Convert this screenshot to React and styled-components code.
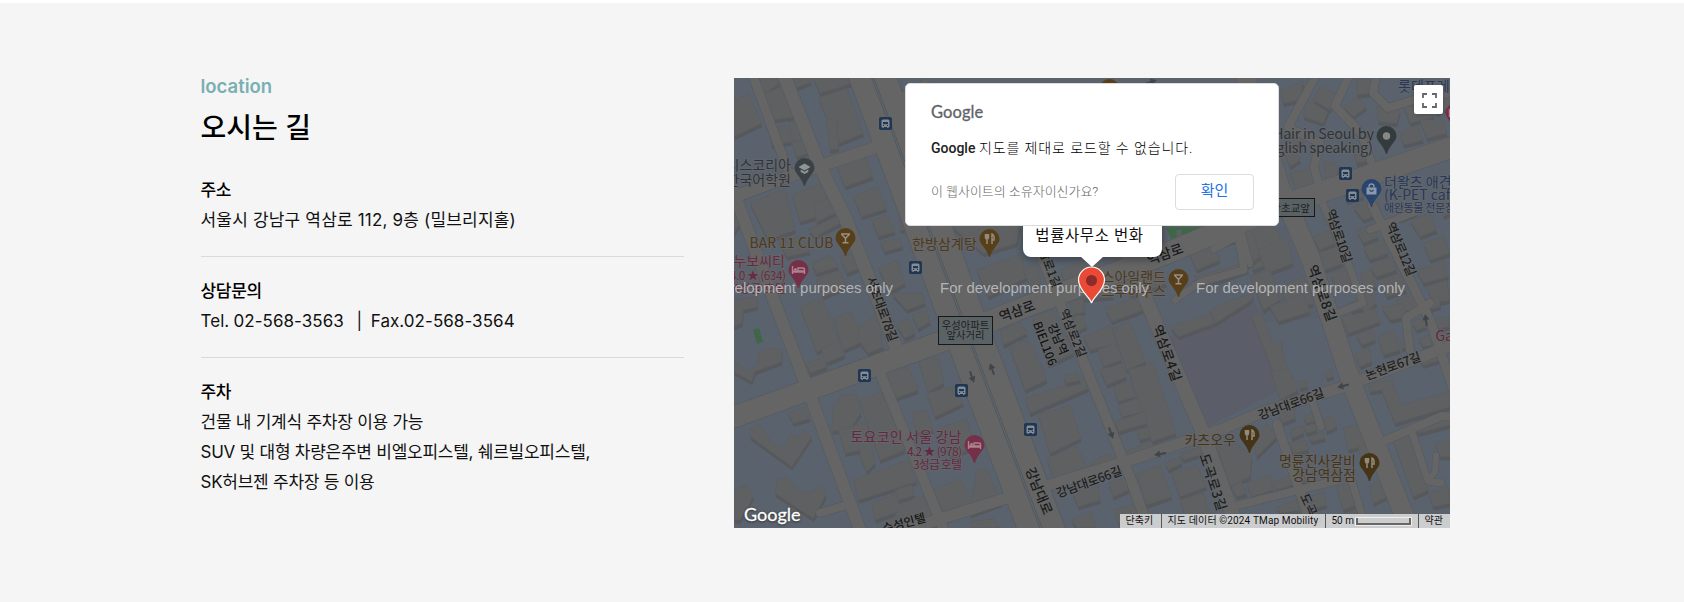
import React from "react";
import styled, { createGlobalStyle } from "styled-components";

const Global = createGlobalStyle`
  * { box-sizing: border-box; }
  body { margin: 0; background: #fff; font-family: Inter, "Noto Sans CJK KR", sans-serif; }
`;

const Section = styled.section`
  display: flex;
  gap: 50px;
  height: 599px;
  margin-top: 3px;
  padding: 75px 234px 0 201px;
  background: #f5f5f5;
`;
const Info = styled.div`
  width: 483px;
  flex: none;
`;
const Eyebrow = styled.p`
  margin: -7px 0 0 -0.5px;
  font-size: 18.5px;
  line-height: 30px;
  font-weight: 600;
  letter-spacing: 0;
  color: #7aafb2;
`;
const Title = styled.h2`
  margin: 6px 0 26px -0.5px;
  font-size: 28px;
  line-height: 42px;
  font-weight: 500;
  letter-spacing: 0;
  color: #000;
`;
const Entry = styled.div`
  padding-bottom: 21px;
  margin-bottom: 19px;
  border-bottom: 1px solid ${(p) => (p.$last ? "transparent" : "#dadada")};
`;
const Term = styled.h3`
  margin: 0;
  font-size: 17px;
  line-height: 30px;
  font-weight: 500;
  letter-spacing: -0.3px;
  color: #000;
  text-indent: -0.5px;
`;
const Line = styled.p`
  margin: 0;
  font-size: ${(p) => p.$size || "17px"};
  line-height: 30px;
  font-weight: 400;
  letter-spacing: ${(p) => p.$track || "-0.25px"};
  word-spacing: ${(p) => p.$gap || 0};
  color: #111;
  white-space: pre;
  text-indent: -0.5px;
`;

const MapBox = styled.div`
  position: relative;
  width: 716px;
  height: 450px;
  flex: none;
  overflow: hidden;
  background: #59636d;
`;
const Canvas = styled.svg`
  display: block;
  width: 716px;
  height: 450px;
`;
const Dialog = styled.div`
  position: absolute;
  left: 171px;
  top: 5px;
  width: 374px;
  height: 143px;
  padding: 18px 24px 0 25px;
  border: 1px solid #dcdcdc;
  border-radius: 5px;
  background: #fff;
`;
const DialogLogo = styled.div`
  font: 400 16.5px/20px Lato, sans-serif;
  letter-spacing: 0.1px;
  color: #5f6368;
  -webkit-text-stroke: 0.3px #5f6368;
`;
const DialogText = styled.div`
  margin-top: 16px;
  font: 500 14px/20px Roboto, "Noto Sans CJK KR", sans-serif;
  color: #212121;
  span { font-weight: 300; letter-spacing: 0.9px; color: #000; }
`;
const DialogFoot = styled.div`
  display: flex;
  justify-content: space-between;
  margin-top: 16px;
`;
const OwnerLink = styled.span`
  padding-top: 9px;
  font: 300 13px/18px Roboto, "Noto Sans CJK KR", sans-serif;
  letter-spacing: -0.03px;
  color: #666;
`;
const OkButton = styled.button`
  width: 79px;
  height: 36px;
  padding: 0 0 2px;
  border: 1px solid #dadce0;
  border-radius: 4px;
  background: #fff;
  color: #1a73e8;
  font: 400 15px/20px Roboto, "Noto Sans CJK KR", sans-serif;
`;
const Bubble = styled.div`
  position: absolute;
  left: 289px;
  top: 130px;
  width: 139px;
  height: 49px;
  padding: 17px 6px 0 0;
  border-radius: 8px;
  background: #fff;
  box-shadow: 0 2px 7px 1px rgba(0, 0, 0, 0.3);
  text-align: center;
  font: 400 15.5px/22px Roboto, "Noto Sans CJK KR", sans-serif;
  letter-spacing: 0.6px;
  color: #111;
  &::after {
    content: "";
    position: absolute;
    left: 57px;
    top: 48px;
    border: 12px solid transparent;
    border-top: 11px solid #fff;
    border-bottom: 0;
  }
`;
const FullscreenButton = styled.button`
  position: absolute;
  right: 7px;
  top: 7px;
  display: grid;
  place-items: center;
  width: 29px;
  height: 29px;
  padding: 1px 0 0 1px;
  border: 0;
  border-radius: 2px;
  background: #fff;
  box-shadow: 0 1px 4px -1px rgba(0, 0, 0, 0.3);
`;
const MapLogo = styled.div`
  position: absolute;
  left: 10px;
  bottom: 3px;
  font: 400 18px/22px Lato, sans-serif;
  color: #fff;
  -webkit-text-stroke: 0.3px #fff;
  text-shadow: 0 0 2px #333, 0 1px 2px #333;
`;
const Credits = styled.div`
  position: absolute;
  right: 0;
  bottom: 0;
  display: flex;
  height: 14px;
  font: 400 10px/13px Roboto, "Noto Sans CJK KR", sans-serif;
  color: #111;
`;
const Credit = styled.span`
  display: flex;
  align-items: center;
  width: ${(p) => p.$w}px;
  padding: 0 0 1px 5.5px;
  background: rgba(213, 213, 213, 0.93);
  border-left: ${(p) => (p.$first ? 0 : 1)}px solid #555;
  letter-spacing: ${(p) => p.$track || 0}px;
  white-space: nowrap;
`;
const ScaleBar = styled.i`
  width: 55px;
  height: 7px;
  margin: 1px 0 0 2px;
  border: 2px solid #666;
  border-top: 0;
  outline: 1px solid #eee;
`;

/* Building footprints, grouped by map sector. Each sector is drawn at three units per pixel. */
const sectors = [
  {
    x: 730, y: 70,
    shapes: [
      "12,95 55,70 95,160 12,200", "62,30 140,24 150,40 80,85", "95,75 175,40 200,95 120,125", "105,125 180,100 195,140 125,150",
      "175,24 235,24 245,35 195,55", "250,24 355,24 365,40 270,70", "265,85 350,55 400,190 325,220", "115,180 165,165 185,215 125,225",
      "175,155 225,150 240,200 190,215", "185,220 235,200 245,245 200,260", "60,400 165,355 195,480 115,510", "185,375 270,340 290,385 255,400 262,440 210,455",
      "315,275 405,250 428,320 345,350", "370,380 440,350 470,415 395,440", "425,450 470,435 495,485 445,500", "450,515 510,505 518,530 465,545",
      "235,480 330,430 340,455 255,500", "245,580 300,555 325,590 260,610", "260,630 330,600 350,650 280,680", "445,595 500,570 525,640 480,665",
      "360,24 425,24 460,95 400,110", "290,150 320,140 325,235 300,240", "250,400 310,380 325,425 260,455", "12,430 30,460 12,490",
      "145,510 215,500 240,545 170,560", "330,560 390,540 400,590 350,610",
    ],
  },
  {
    x: 900, y: 70,
    shapes: [
      "230,600 360,555 385,620 265,680", "150,465 360,465 350,520 250,550", "370,600 410,580 425,640 390,650", "480,600 590,560 640,680 520,690",
      "640,560 740,525 800,640 690,680", "860,530 930,500 960,570 890,600", "920,480 990,470 1010,510 940,530", "1020,470 1120,465 1170,560 1060,600",
      "880,620 1030,580 1045,600 910,650", "100,580 140,560 160,600 120,620", "0,440 12,440 12,480 0,480", "60,540 100,530 110,560 70,570",
    ],
  },
  {
    x: 1230, y: 70,
    shapes: [
      "150,60 220,35 210,90 160,100", "230,90 300,110 280,160 220,140", "270,50 320,70 300,120 250,90", "340,110 385,80 410,110 370,140",
      "380,30 430,30 425,70 380,75", "440,110 510,120 500,160 445,155", "520,110 600,100 610,140 540,160", "610,80 660,60 660,110 620,130",
      "510,190 560,165 580,210 520,225", "570,150 640,150 650,190 590,205", "170,190 215,180 220,220 180,230", "160,240 200,235 210,270 180,290",
      "180,310 250,290 255,340 200,365", "280,270 330,290 310,340 290,340", "370,240 410,225 420,270 380,280", "20,510 70,490 90,560 50,590",
      "85,540 170,500 190,580 110,610", "250,500 300,480 315,520 270,540", "260,550 320,530 340,580 285,600", "300,610 360,590 375,640 320,660",
      "370,410 440,380 455,430 400,450", "380,480 430,460 445,500 400,520", "400,530 460,510 475,550 420,570", "420,590 490,560 500,600 440,620",
      "450,630 510,610 530,660 470,680", "540,450 600,430 620,480 570,500", "580,520 640,500 660,550 600,570", "560,600 640,575 655,620 580,640",
      "590,650 650,630 660,690 610,700", "390,610 425,600 440,650 405,660", "150,650 220,620 250,700 180,725", "560,250 640,220 650,255 570,280",
      "340,365 395,350 400,380 350,395", "500,420 550,400 560,430 510,450", "380,680 420,660 440,700 400,730", "500,690 560,670 570,710 510,730",
      "60,620 120,600 150,690 100,720", "630,390 660,380 660,430 640,440",
    ],
  },
  {
    x: 730, y: 290,
    shapes: [
      "12,30 80,20 82,50 40,60 35,100 12,110", "10,210 50,245 85,225 85,190 115,175 155,180 155,215 75,245 65,275 12,245", "210,50 275,24 330,160 260,185",
      "310,85 360,65 410,150 340,180", "275,175 330,155 345,195 285,220", "385,110 440,75 460,170 415,190 385,150", "485,10 580,10 585,40 530,60",
      "500,105 535,85 555,130 525,145", "545,75 590,60 600,95 565,115", "230,220 285,200 290,230 240,250", "465,250 530,225 565,300 495,325",
      "565,210 600,195 630,210 640,280 595,305", "590,310 670,290 700,340 615,380", "310,350 335,315 380,310 392,370 365,410 305,425", "388,330 455,305 525,480 450,510",
      "355,410 410,395 435,520 410,545", "545,370 590,360 610,420 560,430", "60,415 90,405 130,465 160,470 185,430 210,445 222,420 245,440 185,530 60,440",
      "175,370 225,350 240,385 190,400", "370,570 535,510 560,575 385,630", "425,640 500,610 520,660 435,690", "495,600 545,585 555,615 505,630",
      "140,570 170,560 205,600 240,610 275,585 288,615 250,685 135,610", "12,600 50,585 70,620 30,690 12,690", "610,600 690,565 730,640 650,690", "630,415 710,385 735,470 660,500",
      "520,640 580,615 620,713 470,713", "325,420 370,410 390,480 345,490",
    ],
  },
  {
    x: 970, y: 290,
    shapes: [
      "90,120 150,95 172,130 100,165", "120,175 165,150 190,170 230,270 165,300", "185,80 250,60 310,190 235,225", "165,325 345,265 355,295 180,370",
      "280,260 320,245 330,270 290,280", "205,375 300,345 332,445 240,490", "230,505 320,470 350,530 255,580", "340,140 420,105 440,160 360,180",
      "385,180 435,160 455,210 400,230", "390,240 455,220 470,260 410,285", "428,115 480,95 527,215 470,240", "475,240 550,220 617,430 545,455",
      "430,290 480,275 495,320 445,335", "445,345 500,325 520,365 455,380", "435,395 525,365 530,400 445,425", "500,420 535,410 540,440 510,450",
      "460,485 545,455 555,480 475,510", "405,55 490,24 520,60 425,95", "300,35 340,24 345,65 305,75", "600,110 740,65 745,95 625,140",
      "360,515 420,490 440,530 380,550", "305,600 380,570 390,630 325,650", "500,550 570,525 605,620 530,645", "605,550 680,525 710,590 630,620",
      "630,630 700,610 720,670 650,690", "20,540 50,535 95,640 0,675", "305,690 360,665 380,713 320,713", "585,520 630,500 635,520 595,540",
      "415,580 470,560 475,600 430,620", "435,660 500,640 510,680 445,700", "630,490 690,470 700,490 640,510", "0,695 70,685 90,713 0,713",
      "310,80 335,75 350,110 320,125",
    ],
  },
  {
    x: 1210, y: 290,
    shapes: [
      "125,80 155,70 190,160 215,155 218,190 235,240 190,250", "180,50 280,10 300,65 205,95", "0,60 60,30 130,10 125,30 15,100", "395,80 495,55 510,95 415,130",
      "415,40 450,30 460,55 425,65", "440,135 490,120 495,150 455,165", "505,140 550,120 570,180 520,195", "435,190 475,170 485,215 450,230",
      "570,150 600,140 605,170 575,175", "515,50 580,40 590,80 540,90", "605,95 640,80 650,110 620,120", "625,145 665,135 665,165 640,170",
      "185,245 235,235 265,300 210,330", "345,245 365,240 370,260 350,265", "475,280 545,270 555,295 480,305", "515,300 550,285 575,345 720,305 720,350 555,400",
      "205,370 250,350 255,385 215,400", "240,420 275,405 280,430 245,445", "280,380 320,365 325,390 290,400", "340,390 370,375 380,410 350,425",
      "280,410 315,400 320,420 290,430", "295,440 340,425 345,445 305,455", "400,415 450,400 465,465 415,480", "130,450 170,400 200,440 140,500",
      "20,470 80,460 125,500 120,560 60,590", "545,440 600,425 655,600 610,620", "610,410 690,385 720,370 720,405 625,430", "675,460 720,450 720,500 690,500",
      "65,590 95,575 110,610 80,620", "110,580 180,555 190,600 125,620", "190,575 280,540 290,570 200,600", "300,620 340,605 350,645 310,655",
      "340,530 370,510 385,550 360,560", "480,590 510,570 530,620 490,640", "655,610 715,590 720,640 670,650", "380,590 430,570 450,640 400,660",
      "200,650 260,630 270,660 210,670", "445,465 470,460 480,490 450,500", "640,30 690,20 690,50 650,60", "670,90 715,80 718,110 685,115",
      "240,460 290,450 295,480 250,490", "410,670 460,650 465,670 420,670", "620,200 680,180 690,210 640,225", "265,275 285,270 292,290 270,295",
    ],
  },
];

const roads = [
  ["M750 68L787 168", 9], ["M734 197L784 178L877 147L912 132", 12], ["M730 182L773 298L807 387L862 535", 12],
  ["M780 65L820 167L845 217L898 352", 13], ["M879 370L946 535", 10], ["M820 513L850 504", 8],
  ["M734 417L943 341L1017 310L1165 254L1283 205L1450 148", 21], ["M870 541L1010 497L1127 461L1220 430L1260 413L1343 387L1450 346", 11],
  ["M1006 166L1060 303L1130 477L1150 533", 10], ["M1125 250L1203 433L1240 535", 14], ["M1243 68L1280 187L1310 257L1353 387L1412 535", 19],
  ["M1318 193L1342 247L1363 303L1325 318", 7], ["M1372 205L1430 320L1455 395", 9], ["M1351 72L1335 106L1361 133L1373 167", 8],
  ["M1377 72L1373 93L1388 108L1420 98L1455 92", 8], ["M1318 72L1288 127L1320 143L1314 167L1321 193", 8],
  ["M1214 249L1238 236L1244 270L1200 282L1175 300", 7], ["M1277 424L1307 513L1320 535", 9], ["M1310 395L1321 427", 7],
  ["M1227 508L1335 481", 8], ["M1410 350L1406 318L1430 303", 8], ["M1386 440L1442 416L1455 417", 8],
  ["M1412 432L1428 481L1441 483", 7], ["M1436 455L1435 472L1428 480", 6], ["M1350 475L1366 528", 7], ["M1370 230L1420 210", 7],
  ["M1230 238L1242 234L1250 264", 6], ["M900 98L925 84", 8],
];

const buses = [[885.5, 123.5], [915.5, 267.5], [864.5, 375.5], [961.5, 390.5], [1030.5, 429.5], [1345.5, 173.5], [1352.5, 195.5]];

const FOOD = "#463417";
const DINE = "#574019";
const PINK = "#753047";
const pins = [
  [804.5, 168, "#3b4246", "school"], [845.5, 238, DINE, "drink"], [798.5, 270, PINK, "bed"], [989.5, 239, DINE, "fork"],
  [1178.5, 279, DINE, "drink"], [1386.5, 136, "#343b3d", "dot"], [1371.5, 189, "#29446f", "bag"], [974.5, 445, PINK, "bed"],
  [1249.5, 435, FOOD, "fork"], [1369.5, 463, FOOD, "fork"], [1109.5, 89, DINE, "none"], [1455.5, 113, PINK, "bed"],
];

/* text, x, y, size, colour, anchor, rotation, width */
const labels = [
  ["시스코리아", 791, 170, 14, "#30343a", "end"], ["한국어학원", 791, 184.5, 14, "#30343a", "end"],
  ["BAR 11 CLUB", 749.5, 248, 14, "#4e391b", "start", 0, 84], ["누보씨티", 785, 266, 14, "#6b2a3e", "end"],
  ["4.0 ★ (634)", 786, 280, 12, "#6b2a3e", "end", 0, 56], ["4성급 호텔", 786, 293, 12, "#6b2a3e", "end"],
  ["한방삼계탕", 977, 248.5, 14, "#4e391b", "end", 0, 65], ["토요코인 서울 강남", 961.5, 442, 14, "#642840", "end", 0, 111],
  ["4.2 ★ (978)", 962, 456, 12, "#642840", "end", 0, 55], ["3성급 호텔", 962, 469, 12, "#642840", "end", 0, 49],
  ["카츠오우", 1236, 445, 14, "#463418", "end"], ["명륜진사갈비", 1356, 466, 14, "#463418", "end", 0, 77],
  ["강남역삼점", 1356, 479.5, 14, "#463418", "end", 0, 64], ["부스아일랜드", 1166, 282, 14, "#4e391b", "end"],
  ["스투하우스", 1166, 296, 14, "#4e391b", "end"], ["Hair in Seoul by", 1374, 139, 14.5, "#30343a", "end", 0, 101],
  ["(English speaking)", 1373, 153, 14.5, "#30343a", "end", 0, 118], ["롯데프레", 1398, 91, 14, "#26395b", "start"],
  ["더왈츠 애견", 1384, 187, 14, "#26395b", "start"], ["(K-PET cafe", 1384, 200, 14, "#26395b", "start"],
  ["애완동물 전문점", 1384, 211.5, 11, "#26395b", "start", 0, 71], ["Ga", 1435.5, 341, 14, "#652536", "start"],
  ["서초대로78길", 882, 309, 12.5, "#1f1f1f", "middle", 70, 68], ["역삼로1길", 1048, 263, 12, "#1f1f1f", "middle", 69],
  ["역삼로", 1017, 311, 13.5, "#1a1a1a", "middle", -20], ["역삼로", 1165, 254, 13.5, "#1a1a1a", "middle", -20],
  ["강남역", 1058, 339, 12, "#151515", "middle", 67], ["BIEL106", 1045, 343.5, 12, "#151515", "middle", 69],
  ["역삼로2길", 1073, 333, 12, "#1f1f1f", "middle", 68], ["역삼로4길", 1167, 353, 13.5, "#1a1a1a", "middle", 70, 59],
  ["역삼로8길", 1322, 293, 13.5, "#1a1a1a", "middle", 70, 59], ["역삼로10길", 1339, 236, 12.5, "#1f1f1f", "middle", 71, 56],
  ["역삼로12길", 1401, 249, 12.5, "#1f1f1f", "middle", 67, 57], ["강남대로", 1039, 491, 13.5, "#1a1a1a", "middle", 68],
  ["강남대로66길", 1089, 482, 12.5, "#1f1f1f", "middle", -20, 69], ["강남대로66길", 1291, 404, 12.5, "#1f1f1f", "middle", -20, 69],
  ["논현로67길", 1393, 366, 12.5, "#1f1f1f", "middle", -20, 58], ["도곡로3길", 1213, 482, 13.5, "#1f1f1f", "middle", 72, 59],
  ["도곡로", 1311, 510, 12.5, "#1f1f1f", "middle", 66], ["수성인텔", 904, 523, 12, "#151515", "middle", -15],
];

const arrows = [[972, 377, 160], [992, 369, -20], [1111, 433, 160], [1160, 454, -100], [1343, 386, -105], [1426, 320, -8], [1151, 82, 70]];

function Bus({ x, y }) {
  return (
    <g transform={`translate(${x} ${y})`}>
      <rect x="-6.5" y="-6.5" width="13" height="13" rx="1.8" fill="#203754" />
      <path d="M-4 3.5V-2.5Q-4-4-2.500-4H2.500Q4-4 4-2.500V3.500Z" fill="#858c93" />
      <path d="M-2.5-1.500H2.500V.700H-2.500Z" fill="#203754" />
      <path d="M-2.600 2h1.200M1.400 2h1.200" stroke="#203754" strokeWidth="1" />
      <path d="M-2.400 3.600v1M2.400 3.600v1" stroke="#858c93" strokeWidth="1.400" />
    </g>
  );
}

function Pin({ x, y, color, kind }) {
  return (
    <g transform={`translate(${x} ${y})`}>
      <path d="M-10 0A10 10 0 1 1 10 0C10 5 3 9 .5 18H-.5C-3 9-10 5-10 0Z" fill={color} />
      {kind === "dot" && <circle r="3.7" fill="#888" />}
      {kind === "school" && <path d="M-6-1L0-4.5L6-1L0 2.5ZM-3.8 1.5L0 3.8L3.8 1.5V4L0 6L-3.8 4Z" fill="#909496" />}
      {kind === "drink" && <path d="M-4.5-4H4.5M-3.7-3.5L0 .5L3.7-3.5M0 0V4.5M-3 4.7H3" fill="none" stroke="#999083" strokeWidth="1.5" />}
      {kind === "fork" && <path d="M-4-5V-1.5Q-4 0-2.6 0Q-1 0-1-1.5V-5M-2.5-5V5M2.5 5V-5Q5-4 4.6 1H2.5" fill="none" stroke="#938a7c" strokeWidth="1.5" />}
      {kind === "bed" && <path d="M-6-4V4M-6 2H6M6 4V-.5Q6-2 4-2H-.5V1.5M-5.5 1H5.5" fill="none" stroke="#ad8391" strokeWidth="1.4" />}
      {kind === "bed" && <circle cx="-3" cy="-.8" r="1.3" fill="#ad8391" />}
      {kind === "bag" && <path d="M-5-1.500H5V5.500H-5Z" fill="#8c97a7" />}
      {kind === "bag" && <path d="M-2.400-1.500V-3Q-2.400-5 0-5Q2.400-5 2.400-3V-1.500" fill="none" stroke="#8c97a7" strokeWidth="1.400" />}
      {kind === "bag" && <path d="M-2 .8Q0 4 2 .8" fill="none" stroke={color} strokeWidth="1.2" />}
    </g>
  );
}

function StreetMap() {
  return (
    <Canvas viewBox="734 78 716 450">
      <rect x="734" y="78" width="716" height="450" fill="#59626d" />
      <path d="M1168 338L1254 300L1290 385L1207 427Z" fill="#5b5d69" />
      <path d="M1247 238L1285 225L1320 318L1262 322Z" fill="#595f6b" />
      {sectors.map((s, i) => (
        <g key={i} transform={`translate(${s.x} ${s.y}) scale(.33333)`} strokeLinejoin="round">
          {s.shapes.map((p, j) => (
            <g key={j}>
              <polygon points={p} transform="translate(2 11)" fill="#56585b" />
              <polygon points={p} fill="#5f6062" stroke="#5c5d5f" strokeWidth="2" />
            </g>
          ))}
        </g>
      ))}
      <path d="M753 330L759 328L763 342L757 344Z" fill="#40664a" />
      <path d="M1166 227H1201L1199 234L1172 241Z" fill="#40664a" />
      <path d="M1176 231l5-2 1 6-5 2z" fill="#5b6061" />
      <g fill="none" strokeLinejoin="round" strokeLinecap="round">
        {roads.map(([d, w], i) => <path key={i} d={d} stroke="#555a5f" strokeWidth={w + 1.2} />)}
        <path d="M868 65L970 340L1044 536" stroke="#555a5f" strokeWidth="46.5" />
        {roads.map(([d, w], i) => <path key={i} d={d} stroke="#656565" strokeWidth={w} />)}
        <path d="M868 65L970 340L1044 536" stroke="#656565" strokeWidth="45" />
        <path d="M868 65L970 340L1044 536" stroke="#4f5962" strokeWidth="3" />
        <path d="M868 65L970 340L1044 536" stroke="#64676a" strokeWidth="1" />
      </g>
      {arrows.map(([x, y, r], i) => (
        <path key={i} transform={`translate(${x} ${y}) rotate(${r})`} d="M-1 6V0H-3.5L0-6L3.5 0H1V6Z" fill="#414549" />
      ))}
      <g fontFamily='"Noto Sans CJK KR", sans-serif' fontSize="10.5" textAnchor="middle" fill="#1e1e1e">
        <rect x="938.5" y="316.5" width="54" height="28" fill="#5a6265" stroke="#171717" />
        <text x="965.5" y="328.5" fontSize="10.3">우성아파트</text>
        <text x="965.5" y="339" fontSize="10.3">앞사거리</text>
        <rect x="1255" y="198.5" width="59.5" height="18" fill="#586164" stroke="#171717" />
        <text x="1310" y="211.5" textAnchor="end">서울강초교앞</text>
      </g>
      <g fontFamily='"Noto Sans CJK KR", sans-serif' stroke="#66686a" strokeWidth="2" strokeOpacity=".75" paintOrder="stroke" strokeLinejoin="round">
        {labels.map(([t, x, y, size, fill, anchor, rot, len], i) => (
          <text
            key={i}
            transform={`translate(${x} ${y}) rotate(${rot || 0})`}
            dy={rot ? size * 0.36 : 0}
            fontSize={size}
            fontWeight={rot ? 500 : 400}
            fill={fill}
            textAnchor={anchor}
            textLength={len}
          >
            {t}
          </text>
        ))}
      </g>
      {buses.map(([x, y]) => <Bus key={x} x={x} y={y} />)}
      {pins.map(([x, y, c, k]) => <Pin key={x} x={x} y={y} color={c} kind={k} />)}
      <g fontFamily='"Liberation Sans", sans-serif' fontSize="15" fill="#b4b4b4">
        {[684, 940, 1196].map((x) => (
          <text key={x} x={x} y="293" textLength="209">For development purposes only</text>
        ))}
      </g>
      <path d="M1091.5 303C1090 297 1078.500 290 1078.500 280A13 13 0 0 1 1104.500 280C1104.500 290 1093 297 1091.500 303Z" fill="#ea4a35" stroke="#fff" strokeWidth="1.2" />
      <circle cx="1091.500" cy="280.500" r="5.500" fill="#8b2b2b" />
    </Canvas>
  );
}

export default function App() {
  return (
    <>
      <Global />
      <Section>
        <Info>
          <Eyebrow>location</Eyebrow>
          <Title>오시는 길</Title>
          <Entry>
            <Term>주소</Term>
            <Line $track="0.18px">서울시 강남구 역삼로 112, 9층 (밀브리지홀)</Line>
          </Entry>
          <Entry>
            <Term>상담문의</Term>
            <Line $track="0.05px" $gap="-0.6px">{"Tel. 02-568-3563  \u00a0|  Fax.02-568-3564"}</Line>
          </Entry>
          <Entry $last>
            <Term>주차</Term>
            <Line>건물 내 기계식 주차장 이용 가능</Line>
            <Line>SUV 및 대형 차량은주변 비엘오피스텔, 쉐르빌오피스텔,</Line>
            <Line>SK허브젠 주차장 등 이용</Line>
          </Entry>
        </Info>
        <MapBox>
          <StreetMap />
          <Bubble>법률사무소 번화</Bubble>
          <FullscreenButton aria-label="전체 화면">
            <svg width="15" height="15" viewBox="0 0 15 15" fill="none" stroke="#666" strokeWidth="1.8">
              <path d="M1 5V1H5M10 1H14V5M14 10V14H10M5 14H1V10" />
            </svg>
          </FullscreenButton>
          <MapLogo>Google</MapLogo>
          <Credits>
            <Credit $first $w={41}>단축키</Credit>
            <Credit $w={164} $track={0.13}>지도 데이터 ©2024 TMap Mobility</Credit>
            <Credit $w={93}>50 m<ScaleBar /></Credit>
            <Credit $w={32}>약관</Credit>
          </Credits>
          <Dialog>
            <DialogLogo>Google</DialogLogo>
            <DialogText>Google <span>지도를 제대로 로드할 수 없습니다.</span></DialogText>
            <DialogFoot>
              <OwnerLink>이 웹사이트의 소유자이신가요?</OwnerLink>
              <OkButton>확인</OkButton>
            </DialogFoot>
          </Dialog>
        </MapBox>
      </Section>
    </>
  );
}
